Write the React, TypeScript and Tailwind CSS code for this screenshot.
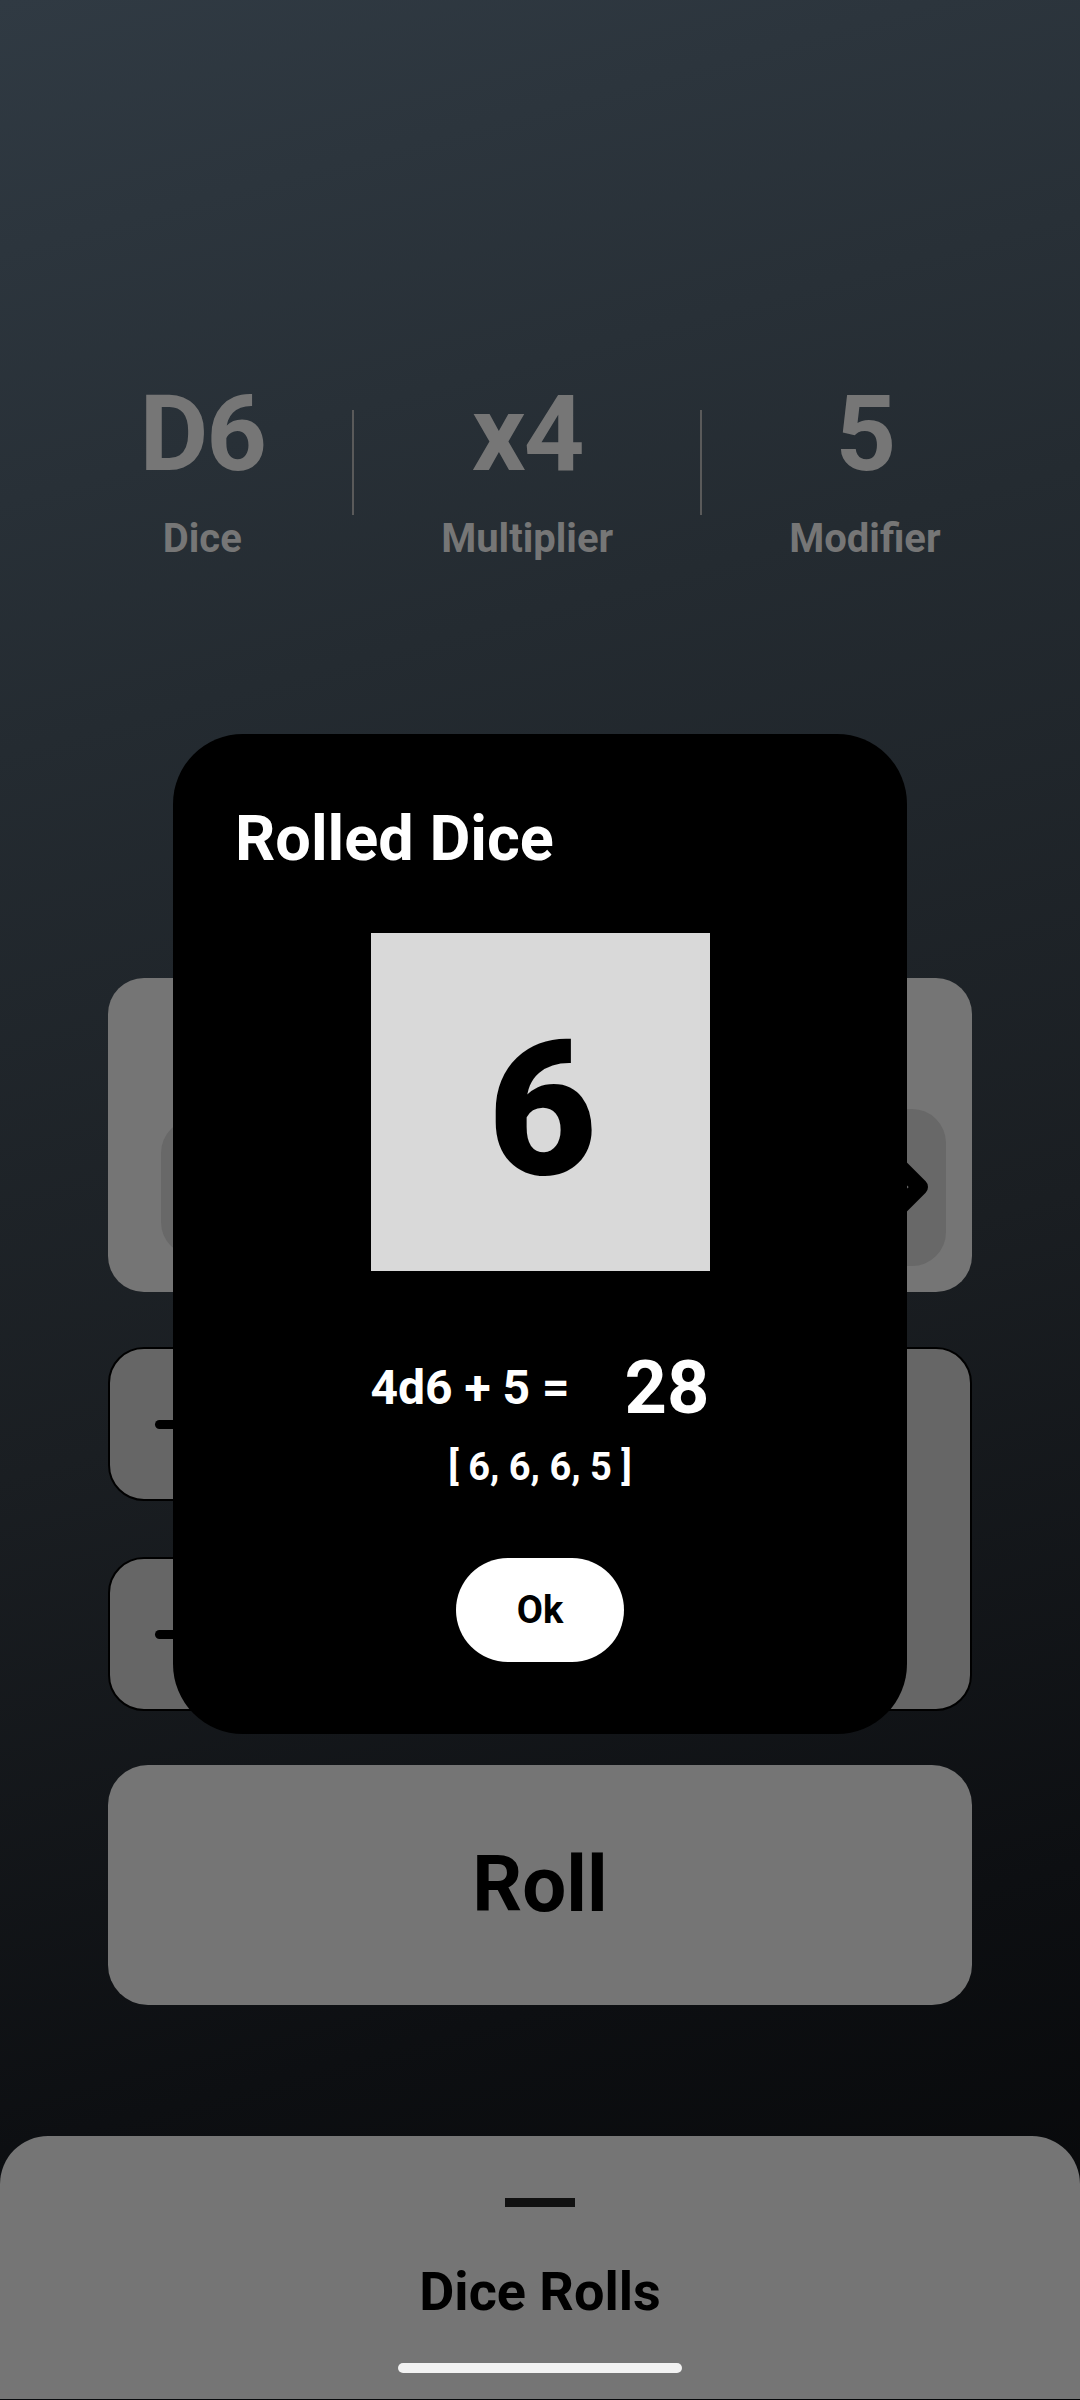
import React from "react";

function Stat({ value, label }: { value: string; label: string }) {
  return (
    <div className="flex flex-col items-center px-[87px]">
      <div className="text-[106px] leading-none font-bold tracking-[-2px] text-[#767676]">{value}</div>
      <div className="mt-[32px] text-[40px] leading-none font-bold text-[#767676]">{label}</div>
    </div>
  );
}

function Chevron({ dir }: { dir: "left" | "right" }) {
  return (
    <svg width="50" height="90" viewBox="0 0 50 90" fill="none">
      {dir === "right" ? (
        <path d="M4 7 L42 45 L4 83" stroke="#000" strokeWidth="16" strokeLinecap="round" strokeLinejoin="round" />
      ) : (
        <path d="M46 7 L8 45 L46 83" stroke="#000" strokeWidth="16" strokeLinecap="round" strokeLinejoin="round" />
      )}
    </svg>
  );
}

function StepRow() {
  return (
    <div className="h-[154px] rounded-[36px] border-2 border-black bg-[#666666] flex items-center pl-[45px]">
      <div className="w-[50px] h-[9px] rounded-full bg-black" />
    </div>
  );
}

export default function App() {
  return (
    <div className="relative w-[1080px] h-[2400px] overflow-hidden bg-[linear-gradient(165deg,#303a43_0%,#242b31_28%,#1a1e22_55%,#0d0f12_80%,#050607_100%)] font-['Roboto',sans-serif]">
      <div className="flex flex-col items-center pt-[381px]">
        <div className="flex">
          <Stat value="D6" label="Dice" />
          <div className="mt-[29px] h-[105px] w-[2px] bg-[#5a5a5a]" />
          <Stat value="x4" label="Multiplier" />
          <div className="mt-[29px] h-[105px] w-[2px] bg-[#5a5a5a]" />
          <Stat value="5" label="Modifier" />
        </div>

        <div className="mt-[419px] w-[864px] flex flex-col">
          <div className="h-[314px] rounded-[36px] bg-[#757575] flex items-center justify-between pl-[53px] pr-[26px] pt-[104px]">
            <div className="w-[110px] h-[137px] rounded-[34px] bg-[#686868] flex items-center pl-[18px]">
              <Chevron dir="left" />
            </div>
            <div className="w-[110px] h-[157px] rounded-[34px] bg-[#686868] flex items-center justify-end pr-[18px]">
              <Chevron dir="right" />
            </div>
          </div>

          <div className="mt-[55px] h-[364px] flex gap-[16px]">
            <div className="w-[400px] flex flex-col justify-between">
              <StepRow />
              <StepRow />
            </div>
            <div className="flex-1 rounded-[36px] border-2 border-black bg-[#666666]" />
          </div>

          <div className="mt-[54px] h-[240px] rounded-[40px] bg-[#757575] flex items-center justify-center">
            <span className="text-[78px] leading-none font-bold text-black">Roll</span>
          </div>
        </div>

        <div className="mt-[131px] w-full h-[263px] rounded-t-[48px] bg-[#757575] flex flex-col items-center">
          <div className="mt-[62px] w-[70px] h-[9px] bg-[#111111]" />
          <div className="mt-[58px] text-[54px] leading-none font-bold text-black">Dice Rolls</div>
          <div className="mt-[44px] w-[284px] h-[10px] rounded-full bg-[#f2f2f2]" />
        </div>
      </div>

      <div className="absolute left-[173px] top-[734px] w-[734px] rounded-[70px] bg-black flex flex-col px-[62px] pt-[73px] pb-[72px]">
        <div className="text-[63px] leading-none font-bold text-white">Rolled Dice</div>
        <div className="self-center mt-[63px] w-[339px] h-[338px] bg-[#d9d9d9] flex items-center justify-center">
          <span className="mt-[16px] ml-[5px] text-[188px] leading-none font-black text-black">6</span>
        </div>
        <div className="mt-[80px] h-[74px] flex items-center justify-center">
          <span className="text-[48px] leading-none font-bold text-white">4d6 + 5 =</span>
          <span className="ml-[55px] text-[74px] leading-none font-bold text-white">28</span>
        </div>
        <div className="mt-[23px] text-[38px] leading-none font-bold text-white text-center">[ 6, 6, 6, 5 ]</div>
        <div className="self-center mt-[72px] w-[168px] h-[104px] rounded-full bg-white flex items-center justify-center">
          <span className="text-[38px] leading-none font-bold text-black">Ok</span>
        </div>
      </div>
    </div>
  );
}
